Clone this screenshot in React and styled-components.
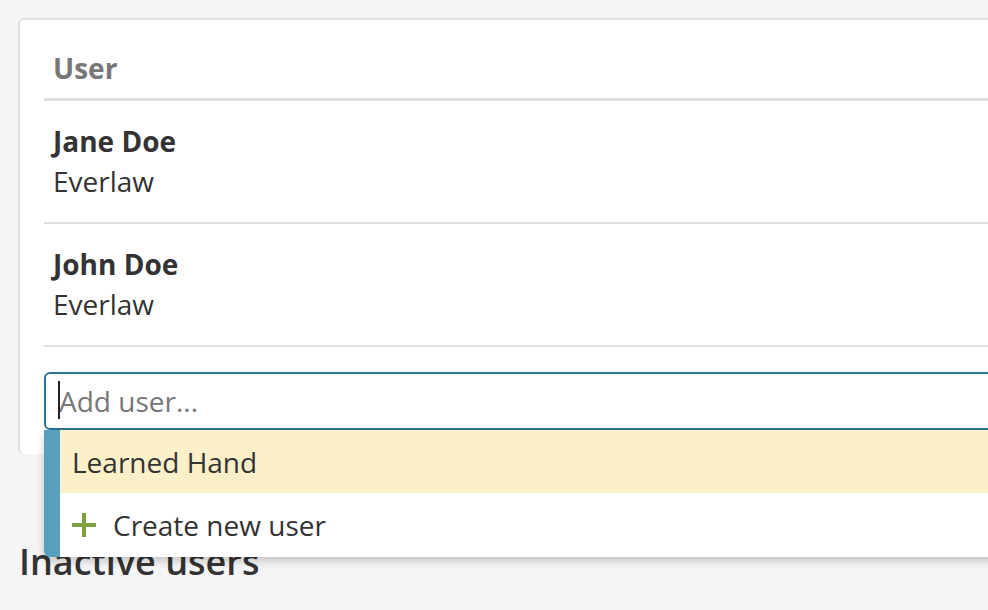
import React from 'react'
import styled, { createGlobalStyle } from 'styled-components'

const GlobalStyle = createGlobalStyle`
  html, body {
    margin: 0;
    padding: 0;
    background: #f4f5f4;
    overflow: hidden;
  }
  body {
    font-family: "Open Sans", "Noto Sans", "DejaVu Sans", sans-serif;
    color: #333;
  }
`

const Page = styled.div`
  width: 1120px;
  padding: 18px 0 0 18px;
`

const Card = styled.section`
  background: #fff;
  border: 2px solid #e0e0e0;
  border-bottom: none;
  border-radius: 6px;
  padding: 0 24px 24px 24px;
`

const HeaderCell = styled.div`
  padding: 30px 9px 12px;
  border-bottom: 3px solid #e0e0e0;
  font-size: 28px;
  line-height: 36px;
  font-weight: 700;
  color: #777;
`

const Row = styled.div`
  padding: 20px 9px 21px;
  border-bottom: 2px solid #e0e0e0;
`

const Name = styled.div`
  font-size: 28px;
  line-height: 40px;
  font-weight: 700;
  color: #333;
`

const Company = styled.div`
  font-size: 28px;
  line-height: 40px;
  color: #333;
`

const InputWrap = styled.div`
  position: relative;
  margin-top: 25px;
`

const Input = styled.input`
  box-sizing: border-box;
  display: block;
  width: 100%;
  height: 58px;
  border: 2px solid #2e7391;
  border-radius: 6px;
  padding: 0 13px;
  font-family: inherit;
  font-size: 28px;
  color: #333;
  outline: none;

  &::placeholder {
    color: #777;
  }
`

const Caret = styled.span`
  position: absolute;
  left: 14px;
  top: 9px;
  width: 2px;
  height: 38px;
  background: #222;
  pointer-events: none;
`

const Menu = styled.ul`
  position: absolute;
  z-index: 2;
  top: 58px;
  left: 0;
  right: 0;
  margin: 0;
  padding: 0;
  list-style: none;
  background: #fff;
  border-left: 16px solid #569fbd;
  border-radius: 0 0 0 6px;
  box-shadow: 0 4px 8px rgba(0, 0, 0, 0.2);
`

const MenuItem = styled.li`
  display: flex;
  align-items: center;
  gap: 17px;
  height: ${({ tall }) => (tall ? '64px' : '63px')};
  padding-left: 12px;
  background: ${({ active }) => (active ? '#fcf0c9' : '#fff')};
  font-size: 28px;
  color: #333;
`

const PlusIcon = () => (
  <svg width="24" height="24" viewBox="0 0 24 24">
    <path d="M12 1v22M1 12h22" stroke="#7fa03f" strokeWidth="4" strokeLinecap="round" />
  </svg>
)

const SectionTitle = styled.h2`
  margin: 88px 0 0 1px;
  font-size: 36px;
  line-height: 40px;
  font-weight: 600;
  color: #333;
`

const users = [
  { name: 'Jane Doe', org: 'Everlaw' },
  { name: 'John Doe', org: 'Everlaw' },
]

const App = () => (
  <Page>
    <GlobalStyle />
    <Card>
      <HeaderCell>User</HeaderCell>
      {users.map((u) => (
        <Row key={u.name}>
          <Name>{u.name}</Name>
          <Company>{u.org}</Company>
        </Row>
      ))}
      <InputWrap>
        <Input placeholder="Add user..." />
        <Caret />
        <Menu>
          <MenuItem active>Learned Hand</MenuItem>
          <MenuItem tall>
            <PlusIcon />
            Create new user
          </MenuItem>
        </Menu>
      </InputWrap>
    </Card>
    <SectionTitle>Inactive users</SectionTitle>
  </Page>
)

export default App
